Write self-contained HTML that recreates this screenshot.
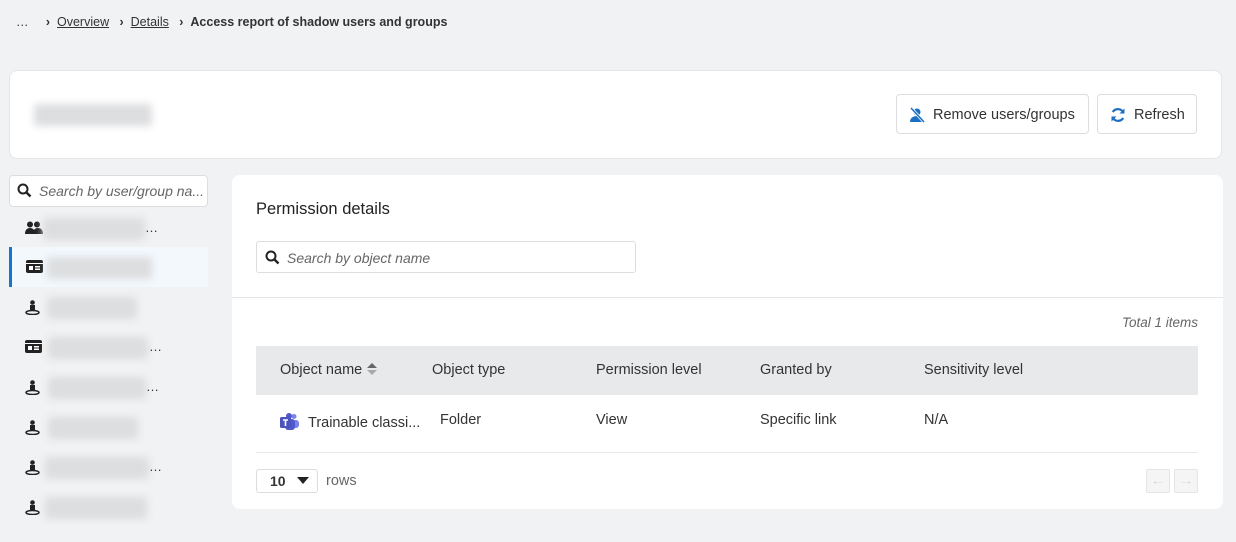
<!DOCTYPE html>
<html><head><style>
*{box-sizing:border-box;margin:0;padding:0}
body{width:1236px;height:542px;background:#f1f2f4;font-family:"Liberation Sans",sans-serif;color:#333;position:relative;overflow:hidden;font-size:14px}
.abs{position:absolute}
.bc{top:15px;left:16px;font-size:12.5px;color:#333;white-space:nowrap}
.bc a{color:#333;text-decoration:underline}
.card{background:#fff;border-radius:8px;border:1px solid #e4e5e8}
.blur{background:#dcdddf;filter:blur(4px);border-radius:3px}
.btn{position:absolute;top:94px;height:40px;border:1px solid #dcdde0;border-radius:4px;background:#fff;display:flex;align-items:center;font-size:14.5px;color:#333;padding-top:2px}
.item{position:absolute;left:9px;width:199px;height:40px}
.item svg{position:absolute;left:16px;top:13px}
.item .blur{position:absolute;top:10px;height:22px}
.item .dots{position:absolute;top:12px;font-size:13px}
</style></head><body>
<div class="abs bc">…&nbsp;&nbsp;&nbsp;&nbsp;&nbsp;<b>›</b>&nbsp;&nbsp;<a>Overview</a>&nbsp;&nbsp;&nbsp;<b>›</b>&nbsp;&nbsp;<a>Details</a>&nbsp;&nbsp;&nbsp;<b>›</b>&nbsp;&nbsp;<b>Access report of shadow users and groups</b></div>

<div class="abs card" style="left:9px;top:70px;width:1213px;height:89px"></div>
<div class="abs blur" style="left:34px;top:104px;width:118px;height:22px"></div>
<div class="btn" style="left:896px;width:193px"><svg style="margin:0 8px 0 12px" width="16" height="16" viewBox="0 0 16 16"><circle cx="8" cy="5" r="3.5" fill="#1b6ec2"/><path d="M1 15c0-4 3-6 7-6s7 2 7 6z" fill="#1b6ec2"/><path d="M2 1l13 14" stroke="#fff" stroke-width="3"/><path d="M2 1l13 14" stroke="#1b6ec2" stroke-width="1.5"/></svg>Remove users/groups</div>
<div class="btn" style="left:1097px;width:100px"><svg style="margin:0 8px 0 12px" width="16" height="16" viewBox="0 0 16 16" fill="none" stroke="#1b6ec2" stroke-width="2.2"><path d="M13.5 6A6 6 0 0 0 2.8 5"/><path d="M2.5 10a6 6 0 0 0 10.7 1"/><path d="M14.5 1.5v5h-5z" fill="#1b6ec2" stroke="none"/><path d="M1.5 14.5v-5h5z" fill="#1b6ec2" stroke="none"/></svg>Refresh</div>

<div class="abs card" style="left:9px;top:175px;width:199px;height:32px;border-color:#dcdde0;border-radius:4px"></div>
<svg class="abs" style="left:17px;top:183px" width="15" height="15" viewBox="0 0 15 15"><circle cx="6" cy="6" r="4.5" stroke="#222" stroke-width="2" fill="none"/><path d="M9.5 9.5l4 4" stroke="#222" stroke-width="2.4"/></svg>
<div class="abs" style="left:39px;top:183px;font-style:italic;color:#666;font-size:14px">Search by user/group na...</div>

<div class="item" style="top:208px"><svg width="18" height="14" viewBox="0 0 18 14" style="left:16px;top:13px"><circle cx="5" cy="3.5" r="3" fill="#222"/><circle cx="12" cy="3.5" r="3" fill="#222"/><path d="M0 13c0-4 2-6 5-6s5 2 5 6zM8 13c0-4 2-6 5-6s5 2 5 6z" fill="#222"/></svg><div class="blur" style="left:34px;width:102px"></div><div class="dots" style="left:136px">…</div></div>
<div class="item" style="top:247px;background:#f3f8fd;border-left:3px solid #1576d2"><svg width="17" height="13" viewBox="0 0 17 13" style="left:14px"><rect width="17" height="13" rx="2" fill="#222"/><rect x="0" y="3" width="17" height="1" fill="#fff"/><rect x="3" y="6" width="4" height="4" fill="#fff"/><rect x="9" y="6" width="5" height="1.5" fill="#fff"/><rect x="9" y="8.5" width="5" height="1.5" fill="#fff"/></svg><div class="blur" style="left:35px;width:105px"></div></div>
<div class="item" style="top:287px"><svg width="15" height="15" viewBox="0 0 15 15"><circle cx="7.5" cy="2.5" r="2.3" fill="#222"/><rect x="5" y="5" width="5" height="6" fill="#222"/><ellipse cx="7.5" cy="12.5" rx="6.5" ry="2" fill="none" stroke="#222" stroke-width="1.5"/></svg><div class="blur" style="left:38px;width:90px"></div></div>
<div class="item" style="top:327px"><svg width="17" height="13" viewBox="0 0 17 13"><rect width="17" height="13" rx="2" fill="#222"/><rect x="0" y="3" width="17" height="1" fill="#fff"/><rect x="3" y="6" width="4" height="4" fill="#fff"/><rect x="9" y="6" width="5" height="1.5" fill="#fff"/><rect x="9" y="8.5" width="5" height="1.5" fill="#fff"/></svg><div class="blur" style="left:39px;width:100px"></div><div class="dots" style="left:140px">…</div></div>
<div class="item" style="top:367px"><svg width="15" height="15" viewBox="0 0 15 15"><circle cx="7.5" cy="2.5" r="2.3" fill="#222"/><rect x="5" y="5" width="5" height="6" fill="#222"/><ellipse cx="7.5" cy="12.5" rx="6.5" ry="2" fill="none" stroke="#222" stroke-width="1.5"/></svg><div class="blur" style="left:39px;width:98px"></div><div class="dots" style="left:137px">…</div></div>
<div class="item" style="top:407px"><svg width="15" height="15" viewBox="0 0 15 15"><circle cx="7.5" cy="2.5" r="2.3" fill="#222"/><rect x="5" y="5" width="5" height="6" fill="#222"/><ellipse cx="7.5" cy="12.5" rx="6.5" ry="2" fill="none" stroke="#222" stroke-width="1.5"/></svg><div class="blur" style="left:39px;width:90px"></div></div>
<div class="item" style="top:447px"><svg width="15" height="15" viewBox="0 0 15 15"><circle cx="7.5" cy="2.5" r="2.3" fill="#222"/><rect x="5" y="5" width="5" height="6" fill="#222"/><ellipse cx="7.5" cy="12.5" rx="6.5" ry="2" fill="none" stroke="#222" stroke-width="1.5"/></svg><div class="blur" style="left:36px;width:104px"></div><div class="dots" style="left:140px">…</div></div>
<div class="item" style="top:487px"><svg width="15" height="15" viewBox="0 0 15 15"><circle cx="7.5" cy="2.5" r="2.3" fill="#222"/><rect x="5" y="5" width="5" height="6" fill="#222"/><ellipse cx="7.5" cy="12.5" rx="6.5" ry="2" fill="none" stroke="#222" stroke-width="1.5"/></svg><div class="blur" style="left:36px;width:102px"></div></div>

<div class="abs card" style="left:232px;top:175px;width:991px;height:334px;border:none"></div>
<div class="abs" style="left:256px;top:200px;font-size:16.5px;color:#222">Permission details</div>
<div class="abs" style="left:256px;top:241px;width:380px;height:32px;border:1px solid #dcdde0;border-radius:3px"></div>
<svg class="abs" style="left:265px;top:250px" width="15" height="15" viewBox="0 0 15 15"><circle cx="6" cy="6" r="4.5" stroke="#222" stroke-width="2" fill="none"/><path d="M9.5 9.5l4 4" stroke="#222" stroke-width="2.4"/></svg>
<div class="abs" style="left:287px;top:250px;font-style:italic;color:#666;font-size:14px">Search by object name</div>
<div class="abs" style="left:232px;top:297px;width:991px;height:1px;background:#e4e5e8"></div>
<div class="abs" style="left:1080px;top:315px;width:118px;text-align:right;font-style:italic;color:#666;font-size:13.5px">Total 1 items</div>
<div class="abs" style="left:256px;top:346px;width:942px;height:49px;background:#e8e9eb"></div>
<div class="abs" style="left:280px;top:362px;font-size:14.5px;color:#333">Object name <svg width="12" height="14" viewBox="0 0 12 14" style="vertical-align:-2px"><path d="M1 6l5-5 5 5z" fill="#666"/><path d="M1 8l5 5 5-5z" fill="#aaa"/></svg></div>
<div class="abs" style="left:432px;top:362px;font-size:14.5px">Object type</div>
<div class="abs" style="left:596px;top:362px;font-size:14.5px">Permission level</div>
<div class="abs" style="left:760px;top:362px;font-size:14.5px">Granted by</div>
<div class="abs" style="left:924px;top:362px;font-size:14.5px">Sensitivity level</div>
<svg class="abs" style="left:280px;top:413px" width="20" height="18" viewBox="0 0 20 18"><circle cx="14" cy="3.5" r="2.5" fill="#7b83eb"/><rect x="10" y="7" width="9" height="8" rx="3" fill="#7b83eb"/><circle cx="9" cy="3" r="3" fill="#5059c9"/><rect x="5" y="6" width="10" height="11" rx="3" fill="#5059c9"/><rect x="0" y="4" width="11" height="11" rx="1.5" fill="#4b53bc"/><path d="M3 7h5M5.5 7v6" stroke="#fff" stroke-width="1.6"/></svg>
<div class="abs" style="left:308px;top:415px;font-size:14.5px">Trainable classi...</div>
<div class="abs" style="left:440px;top:412px;font-size:14.5px">Folder</div>
<div class="abs" style="left:596px;top:412px;font-size:14.5px">View</div>
<div class="abs" style="left:760px;top:412px;font-size:14.5px">Specific link</div>
<div class="abs" style="left:924px;top:412px;font-size:14.5px">N/A</div>
<div class="abs" style="left:256px;top:452px;width:942px;height:1px;background:#e8e9eb"></div>
<div class="abs" style="left:256px;top:469px;width:62px;height:24px;border:1px solid #dcdde0;border-radius:3px;font-weight:bold;font-size:14px;padding:3px 0 0 13px">10 <svg width="12" height="8" viewBox="0 0 12 8" style="margin-left:8px;vertical-align:1px"><path d="M0 0h12L6 7z" fill="#222"/></svg></div>
<div class="abs" style="left:326px;top:473px;color:#666;font-size:14.5px">rows</div>
<div class="abs" style="left:1146px;top:469px;width:24px;height:24px;border:1px solid #e4e5e8;border-radius:2px;background:#f5f5f6;color:#ddd;text-align:center;line-height:22px;font-size:16px">←</div>
<div class="abs" style="left:1174px;top:469px;width:24px;height:24px;border:1px solid #e4e5e8;border-radius:2px;background:#f5f5f6;color:#ddd;text-align:center;line-height:22px;font-size:16px">→</div>
</body></html>
